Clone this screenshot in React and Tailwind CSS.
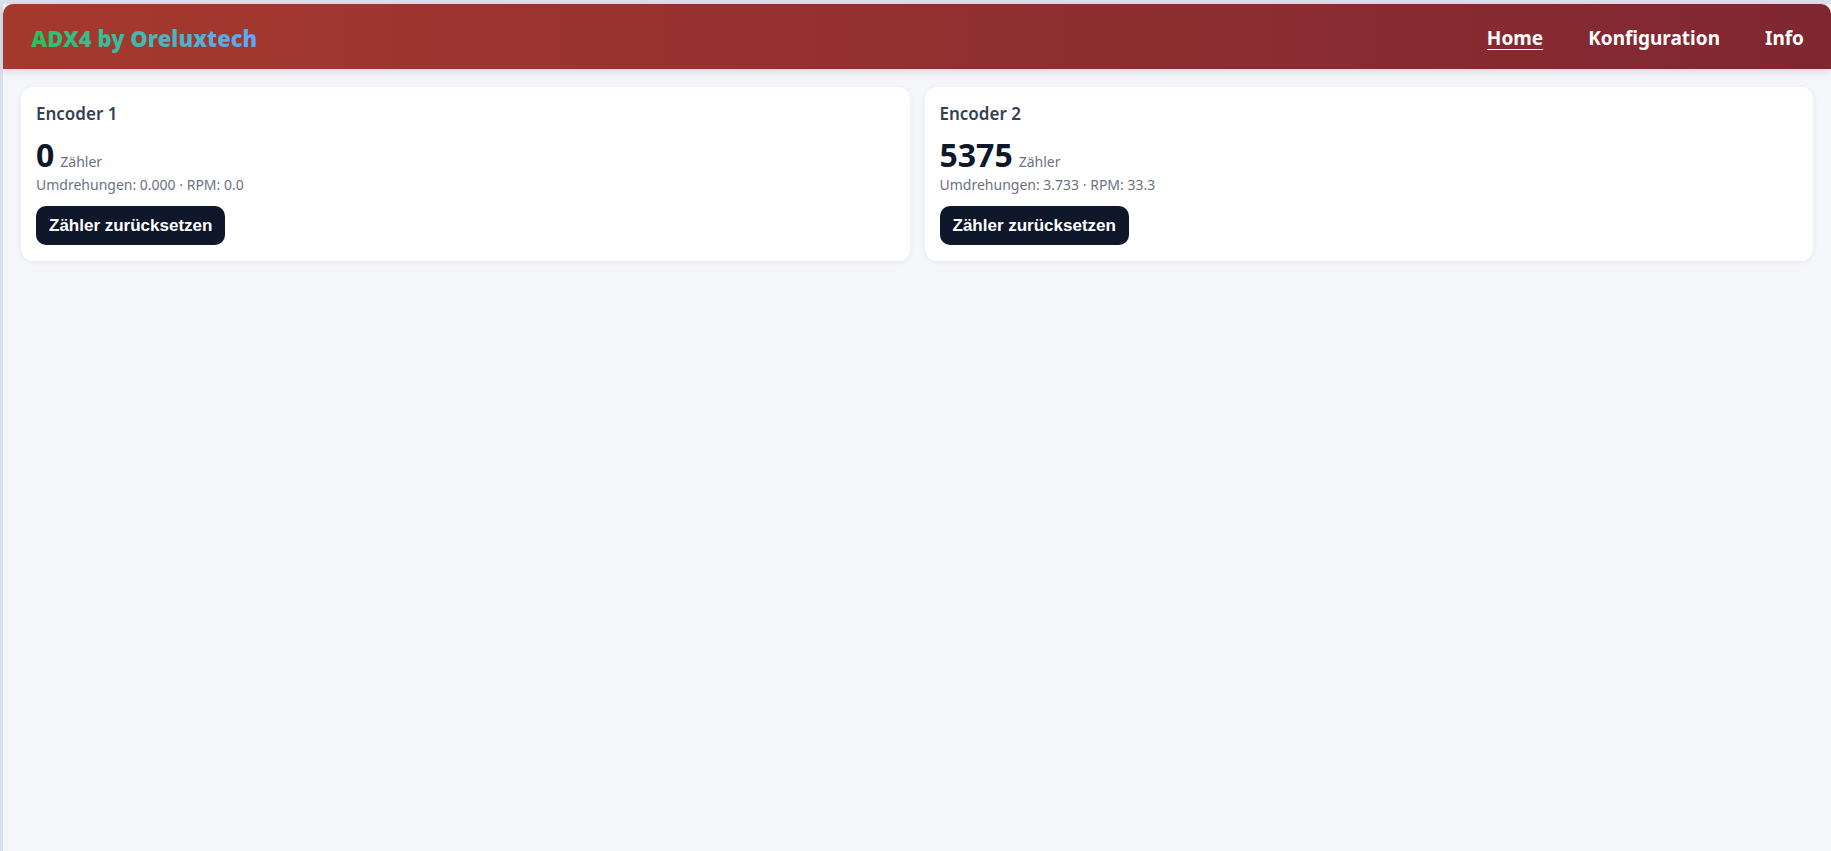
import React from 'react';

const encoders = [
  { name: 'Encoder 1', count: 0, revs: '0.000', rpm: '0.0' },
  { name: 'Encoder 2', count: 5375, revs: '3.733', rpm: '33.3' },
];

const EncoderCard = ({ enc }) => (
  <div className="flex-1 bg-white rounded-xl shadow-[0_1px_6px_rgba(15,23,42,0.06)] px-[15px] py-4">
    <h3 className="text-[17px] leading-[22px] font-semibold text-[#334155]">{enc.name}</h3>
    <div className="mt-3 flex items-baseline gap-[6px]">
      <span className="text-[32px] leading-[36px] font-bold text-[#0f172a]">{enc.count}</span>
      <span className="text-[14px] text-[#6b7280]">Zähler</span>
    </div>
    <p className="mt-[2px] text-[14px] leading-[20px] text-[#6b7280]">
      Umdrehungen: {enc.revs} · RPM: {enc.rpm}
    </p>
    <button className="mt-[11px] h-[39px] px-[13px] rounded-[10px] bg-[#0f172a] text-white text-[17px] font-bold font-['Liberation_Sans',Arial,sans-serif]">
      Zähler zurücksetzen
    </button>
  </div>
);

export default function App() {
  return (
    <div className="min-h-screen bg-[#d9e0ea] pl-[3px] pt-[4px] font-['Noto_Sans',sans-serif]">
      <div className="min-h-[847px] bg-[#f4f6f9]">
        <header className="h-[65px] flex items-center justify-between pt-[3px] pl-[28px] pr-[27px] rounded-t-[10px] bg-gradient-to-r from-[#a6392e] to-[#7f2731] shadow-[0_3px_8px_rgba(15,23,42,0.12)]">
          <span className="text-[22px] font-black bg-gradient-to-r from-[#22c55e] to-[#60a5fa] bg-clip-text text-transparent">
            ADX4 by Oreluxtech
          </span>
          <nav className="flex items-center gap-[45px] text-[19px] font-bold text-white">
            <a href="#" className="underline underline-offset-4">Home</a>
            <a href="#">Konfiguration</a>
            <a href="#">Info</a>
          </nav>
        </header>
        <main className="flex gap-[15px] px-[18px] pt-[18px]">
          {encoders.map((enc) => (
            <EncoderCard key={enc.name} enc={enc} />
          ))}
        </main>
      </div>
    </div>
  );
}
